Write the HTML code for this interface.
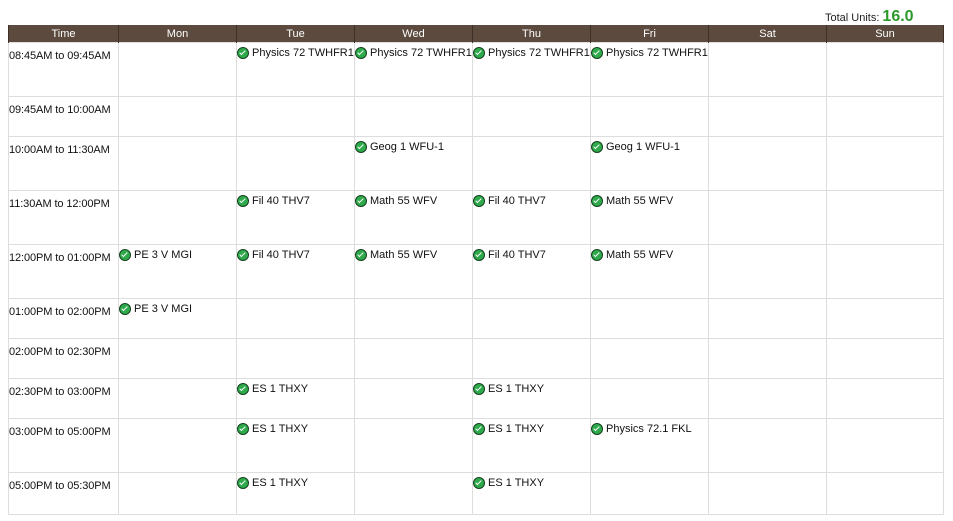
<!DOCTYPE html>
<html><head><style>
body{margin:0;background:#fff;font-family:"Liberation Sans",Arial,sans-serif;width:953px;height:521px;position:relative;overflow:hidden}
.tu{position:absolute;left:825px;top:8px;font-size:11px;color:#222}
.tu b{color:#2a9a2a;font-size:16px;margin-left:3px}
table{position:absolute;left:8px;top:25px;border-collapse:collapse;width:935px;table-layout:fixed;border-left:1px solid #888;border-bottom:1px solid #888;border-right:1px solid #bbb}
th{background:#5b4a3d;color:#fff;font-weight:normal;font-size:11px;height:17px;padding:0;border-left:1px solid #3c3028;border-right:1px solid #3c3028}
td{border:1px solid #ddd;vertical-align:top;padding:0;font-size:11px;color:#111;white-space:nowrap;overflow:hidden}
td.t{padding-top:7px;padding-left:0;letter-spacing:-0.1px}
.e{display:flex;align-items:center;margin-top:4px;margin-left:0}
.i{width:10px;height:10px;border-radius:50%;background:#2eaa4a;border:1px solid #14401e;margin-right:3px;position:relative;flex:none}
.i:after{content:"";position:absolute;left:3px;top:1px;width:2px;height:5px;border:solid #fff;border-width:0 1.5px 1.5px 0;transform:rotate(45deg)}
</style></head><body>
<div class="tu">Total Units:<b>16.0</b></div>
<table>
<colgroup><col style="width:110px"><col style="width:118px"><col style="width:118px"><col style="width:118px"><col style="width:118px"><col style="width:118px"><col style="width:118px"><col style="width:117px"></colgroup>
<tr><th>Time</th><th>Mon</th><th>Tue</th><th>Wed</th><th>Thu</th><th>Fri</th><th>Sat</th><th>Sun</th></tr>
<tr style="height:54px"><td class="t">08:45AM to 09:45AM</td><td></td><td><div class="e"><span class="i"></span>Physics 72 TWHFR1</div></td><td><div class="e"><span class="i"></span>Physics 72 TWHFR1</div></td><td><div class="e"><span class="i"></span>Physics 72 TWHFR1</div></td><td><div class="e"><span class="i"></span>Physics 72 TWHFR1</div></td><td></td><td></td></tr>
<tr style="height:40px"><td class="t">09:45AM to 10:00AM</td><td></td><td></td><td></td><td></td><td></td><td></td><td></td></tr>
<tr style="height:54px"><td class="t">10:00AM to 11:30AM</td><td></td><td></td><td><div class="e"><span class="i"></span>Geog 1 WFU-1</div></td><td></td><td><div class="e"><span class="i"></span>Geog 1 WFU-1</div></td><td></td><td></td></tr>
<tr style="height:54px"><td class="t">11:30AM to 12:00PM</td><td></td><td><div class="e"><span class="i"></span>Fil 40 THV7</div></td><td><div class="e"><span class="i"></span>Math 55 WFV</div></td><td><div class="e"><span class="i"></span>Fil 40 THV7</div></td><td><div class="e"><span class="i"></span>Math 55 WFV</div></td><td></td><td></td></tr>
<tr style="height:54px"><td class="t">12:00PM to 01:00PM</td><td><div class="e"><span class="i"></span>PE 3 V MGI</div></td><td><div class="e"><span class="i"></span>Fil 40 THV7</div></td><td><div class="e"><span class="i"></span>Math 55 WFV</div></td><td><div class="e"><span class="i"></span>Fil 40 THV7</div></td><td><div class="e"><span class="i"></span>Math 55 WFV</div></td><td></td><td></td></tr>
<tr style="height:40px"><td class="t">01:00PM to 02:00PM</td><td><div class="e"><span class="i"></span>PE 3 V MGI</div></td><td></td><td></td><td></td><td></td><td></td><td></td></tr>
<tr style="height:40px"><td class="t">02:00PM to 02:30PM</td><td></td><td></td><td></td><td></td><td></td><td></td><td></td></tr>
<tr style="height:40px"><td class="t">02:30PM to 03:00PM</td><td></td><td><div class="e"><span class="i"></span>ES 1 THXY</div></td><td></td><td><div class="e"><span class="i"></span>ES 1 THXY</div></td><td></td><td></td><td></td></tr>
<tr style="height:54px"><td class="t">03:00PM to 05:00PM</td><td></td><td><div class="e"><span class="i"></span>ES 1 THXY</div></td><td></td><td><div class="e"><span class="i"></span>ES 1 THXY</div></td><td><div class="e"><span class="i"></span>Physics 72.1 FKL</div></td><td></td><td></td></tr>
<tr style="height:42px"><td class="t">05:00PM to 05:30PM</td><td></td><td><div class="e"><span class="i"></span>ES 1 THXY</div></td><td></td><td><div class="e"><span class="i"></span>ES 1 THXY</div></td><td></td><td></td><td></td></tr>
</table>
</body></html>
